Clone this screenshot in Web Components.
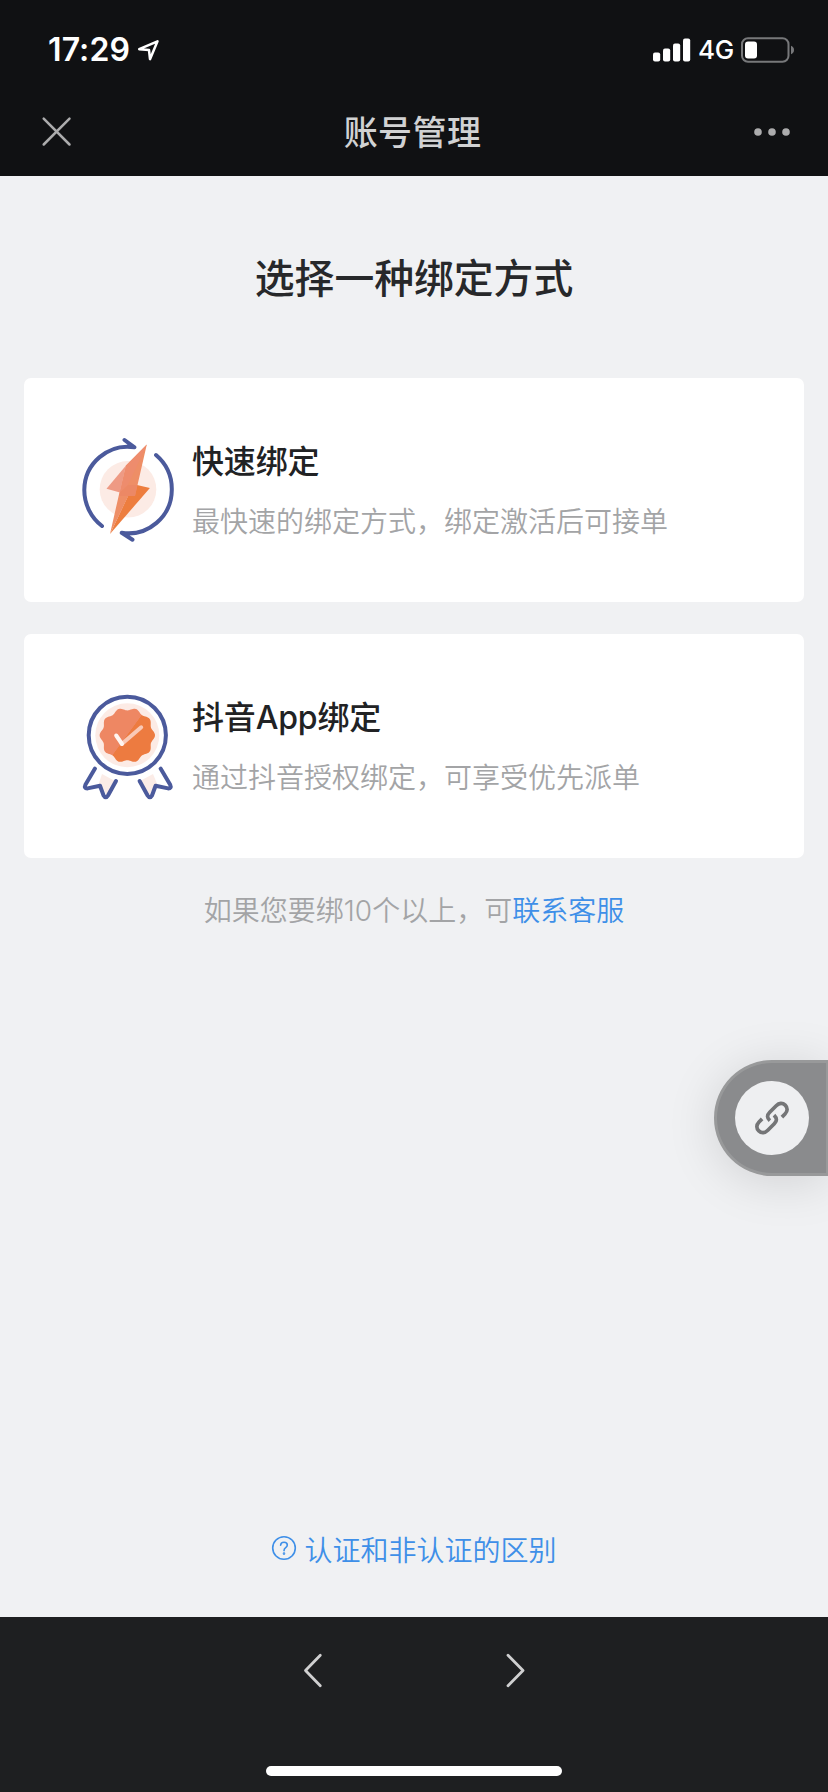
<!DOCTYPE html>
<html lang="zh-CN">
<head>
<meta charset="utf-8">
<title>账号管理</title>
<style>
  html, body { margin: 0; height: 100%; }
  body { font-family: Inter, "Noto Sans CJK SC", sans-serif; background: #f0f1f3; overflow: hidden; }
</style>
</head>
<body>
<bind-app></bind-app>
<script>
const define = (name, html) => {
  const t = document.createElement('template');
  t.innerHTML = html;
  customElements.define(name, class extends HTMLElement {
    constructor() {
      super();
      this.attachShadow({ mode: 'open' }).append(t.content.cloneNode(true));
    }
  });
};

// Outline of a rosette with ten rounded lobes.
const rosette = (cx, cy, r, depth) => Array.from({ length: 180 }, (_, i) => {
  const a = i * Math.PI / 90;
  const d = r + depth * Math.cos(10 * a);
  return (cx + d * Math.cos(a)).toFixed(2) + ',' + (cy + d * Math.sin(a)).toFixed(2);
}).join(' ');

define('status-bar', `
<style>
  :host { display: flex; justify-content: space-between; height: 88px; box-sizing: border-box; padding: 12px 33px 0 48px; color: #fff; }
  .side { display: flex; align-items: center; height: 76px; }
  .time { font-size: 32px; font-weight: 600; letter-spacing: .1px; line-height: 40px; width: 89px; white-space: nowrap; }
  .net { font-size: 26px; line-height: 32px; font-weight: 450; letter-spacing: -.3px; width: 43px; margin-left: 7px; white-space: nowrap; }
  svg { display: block; }
</style>
<div class="side"><span class="time">17:29</span>
  <svg width="24" height="24" viewBox="0 0 24 24"><path d="M2.2 11.2 20.5 3.3 13 21.2 12 12Z" fill="none" stroke="#fff" stroke-width="2.5" stroke-linejoin="round"/></svg>
</div>
<div class="side">
  <svg width="38" height="24" viewBox="0 0 38 24" fill="#fff"><rect x="0" y="14.5" width="7.2" height="9" rx="2"/><rect x="10" y="10.5" width="7.2" height="13" rx="2"/><rect x="20" y="5.5" width="7.2" height="18" rx="2"/><rect x="30" y=".5" width="7.2" height="23" rx="2"/></svg>
  <span class="net">4G</span>
  <svg width="54" height="26" viewBox="0 0 54 26"><rect x="1" y="1.2" width="46.5" height="23.6" rx="6" fill="none" stroke="#77787a" stroke-width="2"/><rect x="4" y="4.5" width="12" height="17" rx="3" fill="#fff"/><path d="M50 8.8q3 1.2 3 4.2t-3 4.2z" fill="#77787a"/></svg>
</div>`);

define('nav-header', `
<style>
  :host { display: grid; grid-template-columns: 100px 1fr 100px; align-items: center; height: 88px; }
  h1 { margin: 2px 3px 0 0; text-align: center; font-size: 34px; font-weight: 500; line-height: 44px; color: #d1d2d3; letter-spacing: .4px; }
  svg { display: block; }
  .close { margin-left: 40px; }
  .more { margin-left: 22px; }
</style>
<svg class="close" width="34" height="34" viewBox="0 0 34 34"><path d="M3.7 3.7 29.5 29.5M29.5 3.7 3.7 29.5" stroke="#acacad" stroke-width="2.5" stroke-linecap="round"/></svg>
<h1><slot></slot></h1>
<svg class="more" width="42" height="12" viewBox="0 0 42 12" fill="#acacad"><circle cx="8" cy="6" r="3.8"/><circle cx="22" cy="6" r="3.8"/><circle cx="36" cy="6" r="3.8"/></svg>`);

define('icon-bolt', `
<style>:host { display: block; width: 100px; height: 120px; } svg { display: block; }</style>
<svg width="100" height="120" viewBox="0 0 100 120">
  <circle cx="50" cy="59.3" r="28.3" fill="#fcebe5"/>
  <g fill="none" stroke="#4b5a9c" stroke-width="4" stroke-linecap="round" stroke-linejoin="round">
    <path d="M24 96A45.5 45.5 0 0 1 6.3 60A43.5 43.5 0 0 1 56.5 17.3L46.5 10"/>
    <path d="M78 25A45 45 0 0 1 93.8 60A43.5 43.5 0 0 1 43.7 102.8L54.5 109.7"/>
  </g>
  <path d="M58 54.7 71.9 58 32 104 50 66Z" fill="#ed7d3e"/>
  <path d="M68.8 14.5 48 35.5 41.5 62.3 32 104 50.3 66H57Z" fill="#ee8e66"/>
  <path d="M48 35.5 28.5 58.8 42 62.5Z" fill="#ee9a84"/>
  <path d="M68.8 14.5 48 35.5 42 62.5 50 55Z" fill="#ee8c6d"/>
  <path d="M42 62.5 50 55 59.3 55 57 66H41Z" fill="#ec8865"/>
</svg>`);

define('icon-badge', `
<style>:host { display: block; width: 100px; height: 120px; } svg { display: block; }</style>
<svg width="100" height="120" viewBox="0 0 100 120">
  <defs><linearGradient id="seal" x1=".1" y1=".22" x2=".9" y2=".78"><stop offset=".49" stop-color="#ee8763"/><stop offset=".5" stop-color="#ed7b40"/></linearGradient></defs>
  <path d="M24 88 37 95 30 112 25 102 20 100ZM75 88 62 95 70 112 75 102 80 100Z" fill="#fbece7"/>
  <circle cx="49.3" cy="49.3" r="38.6" fill="#fff" stroke="#4b5a9c" stroke-width="4"/>
  <circle cx="49.3" cy="49.3" r="32" fill="#fcebe5"/>
  <polygon fill="url(#seal)" points="${rosette(49.3, 49.3, 26.3, 1.4)}"/>
  <path d="M43.8 58 63.2 41.3" fill="none" stroke="#f9c9b6" stroke-width="4" stroke-linecap="round"/>
  <path d="M38.2 49.5 44 58" fill="none" stroke="#fff6f1" stroke-width="4" stroke-linecap="round"/>
  <g fill="none" stroke="#4b5a9c" stroke-width="4" stroke-linecap="round" stroke-linejoin="round">
    <path d="M17 82.6 7.4 98.8Q5.7 102.5 9.5 102.4L22 99.8 25.6 109.5Q27.7 113.2 30 109.5L38 95"/>
    <path d="M82.6 82.6 92.2 98.8Q93.9 102.5 90.1 102.4L77.6 99.8 74 109.5Q71.9 113.2 69.6 109.5L61.6 95"/>
  </g>
</svg>`);

define('option-card', `
<style>
  :host { display: flex; box-sizing: border-box; height: 224px; padding: 52px 24px 0 54px; background: #fff; border-radius: 7px; }
  .text { display: flex; flex-direction: column; margin-left: 14px; padding-top: 10px; gap: 18px; }
  h3 { margin: 0; font-size: 32px; line-height: 44px; font-weight: 500; letter-spacing: -.15px; color: #212224; }
  p { margin: 0; font-size: 28px; line-height: 40px; font-weight: 350; color: #a3a4a6; white-space: nowrap; }
</style>
<slot name="icon"></slot>
<div class="text"><h3><slot name="title"></slot></h3><p><slot></slot></p></div>`);

define('help-link', `
<style>
  :host { display: flex; justify-content: center; align-items: center; gap: 7px; color: #3e8fe8; font-size: 28px; line-height: 40px; font-weight: 350; }
  svg { display: block; margin-top: -6px; }
</style>
<svg width="26" height="26" viewBox="0 0 26 26" fill="none" stroke="#3e8fe8" stroke-width="1.6"><circle cx="13" cy="13" r="11.3"/><path d="M9.6 10.3Q9.7 7.2 13 7.2T16.3 10.1Q16.3 11.6 14.7 12.7T13 15.6" stroke-linecap="round"/><circle cx="13" cy="18.6" r=".5"/></svg>
<span><slot></slot></span>`);

define('float-pill', `
<style>
  :host { position: absolute; left: 714px; top: 1060px; width: 114px; height: 116px; box-sizing: border-box; border: 3px solid #98999a; border-right-width: 2px; border-radius: 58px 0 0 58px; background: #8a8b8d; box-shadow: 0 6px 50px rgba(0,0,0,.13); padding: 18px 0 0 18px; }
  div { width: 74px; height: 74px; border-radius: 50%; background: #eeeff1; display: grid; place-items: center; }
</style>
<div><svg width="42" height="42" viewBox="0 0 42 42" fill="none" stroke="#747577" stroke-width="3.7"><path d="M18.9 23.6C15.8 20.7 15.8 18.2 18.7 15.2L25.2 8.7C28 5.9 31.5 5.5 34.2 8.1S36.7 14.2 34 17L30.9 20.1"/><path d="M23 18.1C26.2 21.3 26.2 23.8 23.3 26.8L16.8 33.3C14 36.1 10.5 36.5 7.8 33.9S5.3 27.8 8 25L11.1 21.9"/></svg></div>`);

define('browser-toolbar', `
<style>
  :host { display: flex; flex-direction: column; align-items: center; justify-content: space-between; height: 175px; box-sizing: border-box; padding: 34px 0 16px; background: #1e1f21; }
  nav { display: flex; gap: 162px; }
  svg { display: block; }
  .home { width: 296px; height: 10px; border-radius: 5px; background: #fff; }
</style>
<nav>
  <svg width="40" height="40" viewBox="0 0 40 40" fill="none" stroke="#d0d0d1" stroke-width="2.8" stroke-linecap="round" stroke-linejoin="round"><path d="M27.3 4.3 12.5 19.5 27.3 34.7"/></svg>
  <svg width="40" height="40" viewBox="0 0 40 40" fill="none" stroke="#d0d0d1" stroke-width="2.8" stroke-linecap="round" stroke-linejoin="round"><path d="M13 4.3 28 19.5 13 34.7"/></svg>
</nav>
<div class="home"></div>`);

define('bind-app', `
<style>
  :host { display: flex; flex-direction: column; width: 828px; height: 1792px; position: relative; overflow: hidden; }
  header { background: #101113; height: 176px; }
  main { flex: 1; display: flex; flex-direction: column; padding: 0 24px 46px; background: #f0f1f3; }
  h2 { margin: 75px 0 71px; font-size: 39.8px; line-height: 56px; font-weight: 500; text-align: center; color: #27282a; }
  .cards { display: flex; flex-direction: column; gap: 32px; }
  .note { margin: 33px 0 0; text-align: center; font-size: 28px; line-height: 40px; font-weight: 350; color: #a3a4a6; }
  .note a { color: #3e8fe8; }
  help-link { margin-top: auto; }
</style>
<header><status-bar></status-bar><nav-header>账号管理</nav-header></header>
<main>
  <h2>选择一种绑定方式</h2>
  <div class="cards">
    <option-card><icon-bolt slot="icon"></icon-bolt><span slot="title">快速绑定</span>最快速的绑定方式，绑定激活后可接单</option-card>
    <option-card><icon-badge slot="icon"></icon-badge><span slot="title">抖音App绑定</span>通过抖音授权绑定，可享受优先派单</option-card>
  </div>
  <p class="note">如果您要绑10个以上，可<a>联系客服</a></p>
  <help-link>认证和非认证的区别</help-link>
</main>
<float-pill></float-pill>
<browser-toolbar></browser-toolbar>`);
</script>
</body>
</html>
